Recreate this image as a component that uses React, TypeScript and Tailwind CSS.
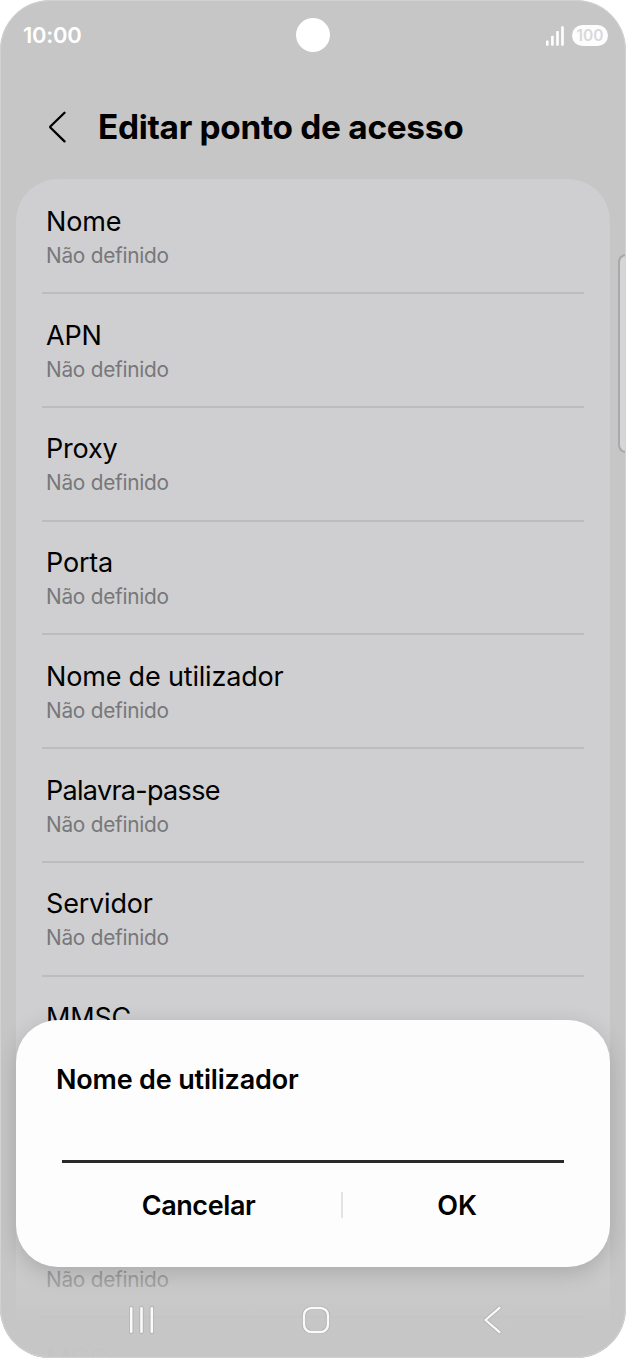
import { useState } from "react";

const FIELDS = [
  "Nome",
  "APN",
  "Proxy",
  "Porta",
  "Nome de utilizador",
  "Palavra-passe",
  "Servidor",
  "MMSC",
  "Proxy MMS",
  "Porta MMS",
  "MCC",
];

function StatusBar() {
  return (
    <div className="relative flex h-[71px] shrink-0 items-center justify-between pr-[18px] pl-[23px] text-white">
      <span className="text-[22px] font-semibold tracking-[-0.3px]">10:00</span>
      {/* camera cutout */}
      <div className="absolute top-[18px] left-[296px] size-[34px] rounded-full bg-white" />
      <div className="flex items-center gap-2">
        <svg className="h-5 w-[18px]" viewBox="0 0 18 20" fill="currentColor">
          <rect x="0" y="14.5" width="2.6" height="5.2" rx="0.8" />
          <rect x="5.1" y="9.8" width="2.6" height="9.9" rx="0.8" />
          <rect x="10.2" y="5" width="2.6" height="14.7" rx="0.8" />
          <rect x="15.2" y="0.2" width="2.6" height="19.5" rx="0.8" />
        </svg>
        <span className="flex h-[21px] w-[36px] items-center justify-center rounded-full bg-[#fdfdfd] text-[15.5px] leading-[21px] font-semibold text-[#d9d9d9]">
          100
        </span>
      </div>
    </div>
  );
}

function Header() {
  return (
    <header className="flex h-[108px] shrink-0 items-center pl-[48px]">
      <button aria-label="Voltar" className="mt-[3px] mr-[30px] block">
        <svg className="h-[32px] w-5" viewBox="0 0 20 32" fill="none" stroke="#000" strokeWidth="2.3">
          <path d="M16.5 1.8 2.6 15.3a1 1 0 0 0 0 1.4L16.5 30.4" strokeLinecap="round" strokeLinejoin="round" />
        </svg>
      </button>
      <h1 className="mt-[3px] text-[33.4px] leading-[40px] font-bold tracking-[-0.3px]">Editar ponto de acesso</h1>
    </header>
  );
}

function FieldRow({ label }: { label: string }) {
  return (
    <li className="flex h-[113.75px] shrink-0 flex-col px-[26px]">
      <div className="flex-1 pt-[23.6px] pl-[4px]">
        <p
          className={`text-[27px] leading-[36px] ${label === "Palavra-passe" ? "tracking-[-0.7px]" : "tracking-[-0.18px]"}`}
        >
          {label}
        </p>
        <p className="text-[20.8px] leading-[32px] tracking-[-0.25px] text-[#77777a]">Não definido</p>
      </div>
      <div className="h-[2px] bg-[#bcbcbe]" />
    </li>
  );
}

function EditDialog() {
  const [value, setValue] = useState("");

  return (
    <div
      role="dialog"
      className="absolute top-[1020px] left-4 flex h-[247px] w-[594px] flex-col rounded-[42px] bg-[#fdfdfe] pt-[42px] shadow-[0_6px_22px_rgba(0,0,0,0.17)]"
    >
      <h2 className="pl-[40px] text-[27px] leading-[36px] font-semibold tracking-[-0.18px]">Nome de utilizador</h2>
      <input
        aria-label="Nome de utilizador"
        value={value}
        onChange={(e) => setValue(e.target.value)}
        className="mx-[46px] h-[65px] border-b-[3px] border-[#29292b] text-[27px] outline-none"
      />
      <div className="mt-[25px] flex h-[36px] items-center text-[27px] leading-[36px] font-semibold">
        <button className="w-[325px] pl-[40px] text-center tracking-[-0.4px]">Cancelar</button>
        <div className="mb-[2px] h-[26px] w-[2px] bg-[#e3e3e4]" />
        <button className="w-[228px] text-center">OK</button>
      </div>
    </div>
  );
}

// Icons get a thin darker outline so they stay readable on any background.
function NavBar() {
  return (
    <nav className="absolute inset-x-0 bottom-0 h-[76px]">
      <div className="flex h-full items-center pl-[126px]">
        <svg className="h-[32px] w-[31px]" viewBox="0 0 31 32" fill="none" strokeLinecap="round">
          <path d="M5.2 4.2v23.6M15.5 4.2v23.6M25.8 4.2v23.6" stroke="#b2b2b2" strokeWidth="4.4" />
          <path d="M5.2 4.2v23.6M15.5 4.2v23.6M25.8 4.2v23.6" stroke="#fafafa" strokeWidth="2.6" />
        </svg>
        <svg className="ml-[143px] h-[32px] w-[32px]" viewBox="0 0 32 32" fill="none">
          <rect x="4" y="4" width="24" height="24" rx="7.5" stroke="#b2b2b2" strokeWidth="4.2" />
          <rect x="4" y="4" width="24" height="24" rx="7.5" stroke="#fafafa" strokeWidth="2.4" />
        </svg>
        <svg className="ml-[148px] h-[32px] w-[24px]" viewBox="0 0 24 32" fill="none" strokeLinecap="round" strokeLinejoin="round">
          <path d="M19.5 3.8 5.5 16l14 12.2" stroke="#b2b2b2" strokeWidth="4" />
          <path d="M19.5 3.8 5.5 16l14 12.2" stroke="#fafafa" strokeWidth="2.3" />
        </svg>
      </div>
    </nav>
  );
}

export default function App() {
  return (
    <div className="h-[1358px] w-[626px] bg-white font-['Inter',sans-serif] text-black">
      <div className="relative flex h-full flex-col overflow-hidden rounded-[50px] bg-[#c6c6c6]">
        <StatusBar />
        <Header />
        <ul className="mx-4 flex min-h-0 flex-1 flex-col overflow-hidden rounded-t-[42px] bg-[#cfcfd1] pt-[1.4px]">
          {FIELDS.map((label) => (
            <FieldRow key={label} label={label} />
          ))}
        </ul>

        {/* edge panel handle */}
        <div className="absolute top-[254px] right-0 h-[199px] w-[8px] rounded-l-[8px] border-2 border-r-0 border-[#a9a9aa] bg-[#d6d6d8]" />

        <div className="absolute inset-x-0 bottom-0 h-[128px] bg-linear-to-b from-[#c6c6c6]/0 to-[#c6c6c6]/99 to-75%" />
        <EditDialog />
        <NavBar />
        <div className="pointer-events-none absolute inset-0 rounded-[50px] border border-[#d2d2d2]" />
      </div>
    </div>
  );
}
